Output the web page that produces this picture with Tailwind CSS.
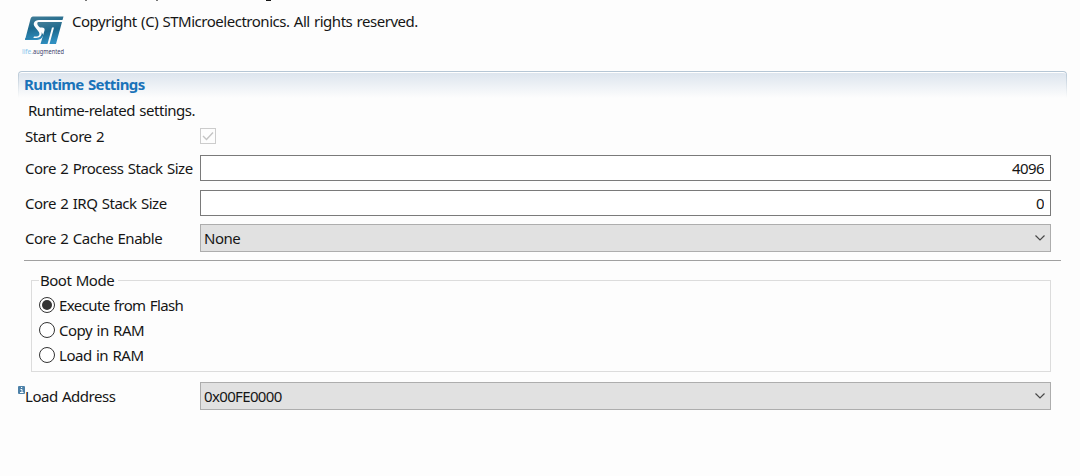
<!DOCTYPE html>
<html lang="en">
<head>
    <meta charset="UTF-8" />
    <meta name="viewport" content="width=device-width, initial-scale=1.0" />
    <title>Runtime Settings</title>
    <script src="https://cdn.jsdelivr.net/npm/@tailwindcss/browser@4"></script>
</head>
<body class="h-[476px] overflow-hidden bg-[#fdfdfd] font-['Noto_Sans','Open_Sans',sans-serif] text-[15px] leading-5 tracking-[-0.48px] text-[#161616] [word-spacing:0.9px]">

<!-- Product header -->
<header class="relative flex h-[71px] pl-[21px]">
    <!-- Descenders of the line scrolled off above -->
    <svg class="absolute left-0 top-0" width="280" height="2" viewBox="0 0 280 2"><path d="M85 0H87V1H85ZM156 0H158V1H156Z" fill="#777" /><path d="M266 0H271V1H266Z" fill="#161616" /></svg>
    <div class="w-[51px] pt-4">
        <svg class="block overflow-visible" width="44" height="40" viewBox="0 0 44 40">
            <defs>
                <linearGradient id="logo" x1="0" y1="0" x2="0.3" y2="1">
                    <stop offset="0" stop-color="#467f98" />
                    <stop offset="0.5" stop-color="#1d688c" />
                    <stop offset="1" stop-color="#2f8fc0" />
                </linearGradient>
            </defs>
            <path fill="url(#logo)" d="M12 0.500H42.500L41.500 4H18C13 4 11.500 8 14 11L17.500 15.500C19.500 18.500 18 20.500 15 20.500H13L11.500 24H4L9.500 3C10 1.500 10.500 0.500 12 0.500Z" />
            <path fill="url(#logo)" d="M17 6H41L35 28H28.500L33 11.500H31L26.500 28H19.500L23.500 14.500C24 12.500 23 11.500 21 11.500H19C16.500 9.500 15.500 7 17 6Z" />
            <path fill="url(#logo)" d="M4.500 22H15C19 22 21.500 19 20.500 16L22 18.500C22.500 21 19.500 24 16 24H4Z" />
            <text x="1" y="37.500" font-size="7.500" textLength="11" lengthAdjust="spacingAndGlyphs" letter-spacing="0" fill="#86c5ec">life.</text>
            <text x="12" y="37.500" font-size="7.500" textLength="31" lengthAdjust="spacingAndGlyphs" letter-spacing="0" fill="#3c4169">augmented</text>
        </svg>
    </div>
    <p class="pt-[11px]">Copyright (C) STMicroelectronics. All rights reserved.</p>
</header>

<main class="ml-[18px] w-[1049px]">
    <!-- Section title bar -->
    <div class="rounded-t bg-linear-to-b from-[#b4c5d4] to-transparent p-px pb-0">
        <h2 class="h-[26px] rounded-t-[3px] border-t border-white bg-linear-to-b from-[#dde5ee] to-[#fdfdfd] pl-[5px] pt-px text-[15px] font-bold leading-5 tracking-[-0.6px] text-[#1a73b9]">Runtime Settings</h2>
    </div>

    <p class="h-[27px] pl-[10px] pt-[2px]">Runtime-related settings.</p>

    <div class="flex h-[30px] items-start pl-[7px] pt-[2px]">
        <span class="-mt-px w-[175px]">Start Core 2</span>
        <span class="mt-px flex size-4 items-center justify-center border border-[#cccccc]">
            <svg width="12" height="10" viewBox="0 0 12 10" fill="none" stroke="#c4c4c4" stroke-width="1.400"><path d="M1 5L4.500 8.500L11 1.500" /></svg>
        </span>
    </div>

    <div class="flex h-[35px] items-start pl-[7px]">
        <label for="process" class="w-[175px] whitespace-nowrap pt-[3px]">Core 2 Process Stack Size</label>
        <input id="process" value="4096" class="h-[26px] w-[851px] border border-[#7a7a7a] bg-white px-1.5 text-right tracking-[-0.6px]" />
    </div>
    <div class="flex h-[34px] items-start pl-[7px]">
        <label for="irq" class="w-[175px] pt-[3px]">Core 2 IRQ Stack Size</label>
        <input id="irq" value="0" class="h-[26px] w-[851px] border border-[#7a7a7a] bg-white px-1.5 text-right tracking-[-0.6px]" />
    </div>
    <div class="flex h-9 items-start pl-[7px]">
        <span class="w-[175px] pt-1">Core 2 Cache Enable</span>
        <button class="flex h-7 w-[851px] items-center justify-between border border-[#adadad] bg-[#e1e1e1] pl-[3px] pr-[5px]">
            None
            <svg width="10" height="6" viewBox="0 0 10 6" fill="none" stroke="#484848" stroke-width="1.200"><path d="M0.500 0.500L5 5L9.500 0.500" /></svg>
        </button>
    </div>

    <hr class="ml-1.5 w-[1037px] border-[#a0a0a0]" />

    <!-- Boot mode group -->
    <section class="ml-[13px] mt-[19px] h-[92px] w-[1020px] border border-[#dcdcdc] pl-[7px]">
        <h3 class="-mt-[11px] w-fit bg-[#fdfdfd] pl-px pr-1 leading-5">Boot Mode</h3>
        <div class="mt-[2px] flex h-[25px] items-center gap-1 tracking-[-0.6px]">
            <span class="flex size-4 items-center justify-center rounded-full border border-[#333333] bg-white"><span class="size-2.5 rounded-full bg-[#333333]"></span></span>
            Execute from Flash
        </div>
        <div class="flex h-[25px] items-center gap-1">
            <span class="size-4 rounded-full border border-[#333333] bg-white"></span>
            Copy in RAM
        </div>
        <div class="flex h-[25px] items-center gap-1">
            <span class="size-4 rounded-full border border-[#333333] bg-white"></span>
            Load in RAM
        </div>
    </section>

    <div class="mt-[10px] flex items-start">
        <svg class="mt-1" width="7" height="8" viewBox="0 0 7 8"><rect width="7" height="8" rx="1" fill="#4d81a8" /><path d="M2.500 3.500H4V6M2 6.500H5.500M3 1.500H4.200" stroke="#fff" fill="none" /></svg>
        <span class="w-[175px] pt-1">Load Address</span>
        <button class="flex h-7 w-[851px] items-center justify-between border border-[#adadad] bg-[#e1e1e1] pl-[3px] pr-[5px] tracking-[-0.65px]">
            0x00FE0000
            <svg width="10" height="6" viewBox="0 0 10 6" fill="none" stroke="#484848" stroke-width="1.200"><path d="M0.500 0.500L5 5L9.500 0.500" /></svg>
        </button>
    </div>
</main>
</body>
</html>
